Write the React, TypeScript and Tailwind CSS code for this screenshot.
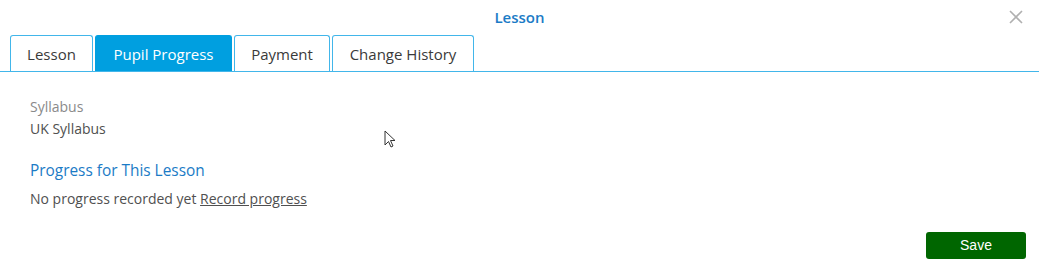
import React from 'react';

const tabs = [
  { label: 'Lesson', w: 'w-[83px]' },
  { label: 'Pupil Progress', w: 'w-[137px]', active: true },
  { label: 'Payment', w: 'w-[96px]' },
  { label: 'Change History', w: 'w-[142px]' },
];

const App: React.FC = () => {
  return (
    <div className="relative w-[1039px] h-[270px] bg-white overflow-hidden font-['Open_Sans',sans-serif] text-[14px]">
      <div className="relative h-[36px] flex items-center justify-center">
        <h1 className="text-[15px] font-semibold text-[#1b7bc6] leading-none -mt-[1px]">Lesson</h1>
        <button className="absolute right-[15px] top-[9px] text-[#b0b0b0]">
          <svg width="16" height="16" viewBox="0 0 16 16">
            <path d="M2 2 L14 14 M14 2 L2 14" stroke="currentColor" strokeWidth="1.6" fill="none" />
          </svg>
        </button>
      </div>

      <div className="flex items-end gap-[2px] pl-[10px] border-b border-[#42b6ea] h-[36px]">
        {tabs.map((t) => (
          <div
            key={t.label}
            className={`${t.w} h-[36px] pt-[1px] flex items-center justify-center rounded-t-[3px] border border-b-0 text-[15px] ${
              t.active ? 'bg-[#009fe0] border-[#009fe0] text-white' : 'bg-white border-[#42b6ea] text-[#3a3a3a]'
            }`}
          >
            {t.label}
          </div>
        ))}
      </div>

      <div className="pl-[30px] pt-[24px]">
        <div className="text-[#8a8a8a] leading-[22px]">Syllabus</div>
        <div className="text-[#505050] leading-[22px]">UK Syllabus</div>
        <h2 className="text-[15.4px] text-[#1b7bc6] mt-[20px] leading-[22px]">Progress for This Lesson</h2>
        <p className="text-[#505050] mt-[6px] leading-[22px]">
          No progress recorded yet <a className="underline text-[#505050] cursor-pointer">Record progress</a>
        </p>
      </div>

      <div className="absolute right-[13px] bottom-[11px]">
        <button className="w-[100px] h-[27px] rounded-[3px] bg-[#006600] text-white text-[14px] font-['Liberation_Sans',Arial,sans-serif]">
          Save
        </button>
      </div>

      <svg className="absolute left-[384px] top-[130px]" width="14" height="20" viewBox="0 0 14 20">
        <path d="M1 1 L1 15 L4.5 11.5 L7 17 L9 16 L6.5 10.5 L11 10.5 Z" fill="white" stroke="#333" strokeWidth="1" />
      </svg>
    </div>
  );
};

export default App;
